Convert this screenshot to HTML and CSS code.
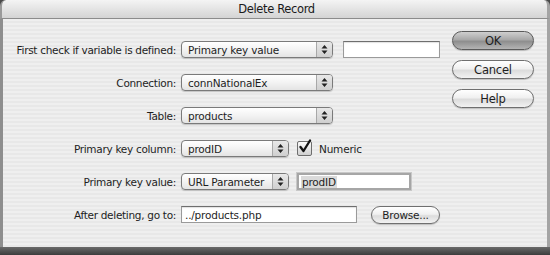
FILE: index.html
```html
<!DOCTYPE html>
<html>
<head>
<meta charset="utf-8">
<link rel="stylesheet" href="styles.css">
</head>
<body>
<div class="window">
  <div class="titlebar">Delete Record</div>
  <div class="body">
    <div class="form">
      <div class="label">First check if variable is defined:</div>
      <div class="ctrl">
        <div class="select w-wide"><span class="val">Primary key value</span><span class="arrows"><svg width="7" height="11" viewBox="0 0 7 11"><path d="M3.5 1 L6.5 4.5 H0.5 Z M3.5 10 L6.5 6.5 H0.5 Z" fill="#222"/></svg></span></div>
        <div class="field w-var"></div>
      </div>

      <div class="label">Connection:</div>
      <div class="ctrl">
        <div class="select w-wide"><span class="val">connNationalEx</span><span class="arrows"><svg width="7" height="11" viewBox="0 0 7 11"><path d="M3.5 1 L6.5 4.5 H0.5 Z M3.5 10 L6.5 6.5 H0.5 Z" fill="#222"/></svg></span></div>
      </div>

      <div class="label">Table:</div>
      <div class="ctrl">
        <div class="select w-wide"><span class="val">products</span><span class="arrows"><svg width="7" height="11" viewBox="0 0 7 11"><path d="M3.5 1 L6.5 4.5 H0.5 Z M3.5 10 L6.5 6.5 H0.5 Z" fill="#222"/></svg></span></div>
      </div>

      <div class="label">Primary key column:</div>
      <div class="ctrl">
        <div class="select w-mid"><span class="val">prodID</span><span class="arrows"><svg width="7" height="11" viewBox="0 0 7 11"><path d="M3.5 1 L6.5 4.5 H0.5 Z M3.5 10 L6.5 6.5 H0.5 Z" fill="#222"/></svg></span></div>
        <div class="check"><svg width="16" height="16" viewBox="0 0 16 16"><path d="M3.5 8 L6.5 12 L13 1.5" fill="none" stroke="#111" stroke-width="2.3" stroke-linecap="round" stroke-linejoin="round"/></svg></div>
        <span class="check-label">Numeric</span>
      </div>

      <div class="label">Primary key value:</div>
      <div class="ctrl">
        <div class="select w-mid"><span class="val">URL Parameter</span><span class="arrows"><svg width="7" height="11" viewBox="0 0 7 11"><path d="M3.5 1 L6.5 4.5 H0.5 Z M3.5 10 L6.5 6.5 H0.5 Z" fill="#222"/></svg></span></div>
        <div class="field w-param focus"><span class="sel">prodID</span></div>
      </div>

      <div class="label">After deleting, go to:</div>
      <div class="ctrl">
        <div class="field w-path">../products.php</div>
        <div class="btn browse">Browse...</div>
      </div>
    </div>
    <div class="buttons">
      <div class="btn main default">OK</div>
      <div class="btn main">Cancel</div>
      <div class="btn main">Help</div>
    </div>
  </div>
  <div class="shadow"></div>
</div>
</body>
</html>
```
FILE: styles.css
```css
* { box-sizing: border-box; }
html, body { margin: 0; padding: 0; }
body {
  width: 550px;
  height: 255px;
  overflow: hidden;
  background: #4a4a4a;
  font-family: "DejaVu Sans", "Noto Sans", sans-serif;
  font-size: 10.5px;
  letter-spacing: -0.2px;
  color: #1e1e1e;
}
.window {
  width: 550px;
  height: 255px;
  display: flex;
  flex-direction: column;
}
.titlebar {
  height: 19px;
  flex: none;
  display: flex;
  align-items: center;
  justify-content: center;
  font-size: 11.5px;
  letter-spacing: -0.35px;
  padding-left: 4px;
  color: #1a1a1a;
  background: linear-gradient(#f4f4f4, #e4e4e4 50%, #d4d4d4);
  border-bottom: 1px solid #8c8c8c;
  border-left: 2px solid #9a9a9a;
  border-right: 3px solid #a4a4a4;
  border-radius: 6px 6px 0 0;
}
.body {
  flex: none;
  height: 228px;
  display: flex;
  background: repeating-linear-gradient(#efefef 0 2px, #e8e8e8 2px 4px);
  border-left: 3px solid #8e8e8e;
  border-right: 3px solid #a4a4a4;
}
.form {
  padding-top: 14px;
  display: grid;
  grid-template-columns: 173px 259px;
  grid-auto-rows: 33px;
  column-gap: 5px;
  align-items: center;
}
.label {
  text-align: right;
  white-space: nowrap;
  letter-spacing: -0.3px;
}
.ctrl {
  display: flex;
  align-items: center;
}
.select {
  height: 17px;
  display: flex;
  align-items: center;
  border: 1px solid #7a7a7a;
  border-radius: 4px;
  background: linear-gradient(#ffffff, #f3f3f3 50%, #e4e4e4);
  box-shadow: 0 1px 1px rgba(0,0,0,0.18);
  overflow: hidden;
}
.select .val {
  flex: 1;
  padding-left: 6px;
  white-space: nowrap;
  overflow: hidden;
}
.select .arrows {
  width: 16px;
  height: 100%;
  display: flex;
  align-items: center;
  justify-content: center;
  border-left: 1px solid #a8a8a8;
  background: linear-gradient(#e8e8e8, #cfcfcf);
}
.w-wide { width: 152px; }
.w-mid { width: 108px; }
.field {
  height: 17px;
  background: #fff;
  border: 1px solid #9a9a9a;
  border-top-color: #6e6e6e;
  box-shadow: inset 0 1px 1px rgba(0,0,0,0.12);
  padding-left: 3px;
  display: flex;
  align-items: center;
  white-space: nowrap;
}
.w-var { width: 97px; margin-left: 10px; }
.w-param { width: 114px; margin-left: 8px; }
.w-path { width: 176px; }
.field.focus {
  border: 2px solid #a6a6a6;
  box-shadow: 0 0 0 1px #c8c8c8;
  padding-left: 2px;
}
.sel { background: #dadada; padding: 0 1px; }
.check {
  width: 15px;
  height: 15px;
  margin-left: 8px;
  border: 1px solid #6e6e6e;
  border-radius: 2px;
  background: linear-gradient(#fafafa, #d0d0d0);
  position: relative;
}
.check svg { position: absolute; left: -1px; top: -3px; }
.check-label { margin-left: 7px; }
.btn {
  display: flex;
  align-items: center;
  justify-content: center;
  border: 1px solid #6f6f6f;
  border-radius: 10px;
  background: linear-gradient(#ffffff, #f0f0f0 45%, #dcdcdc 55%, #f2f2f2);
  box-shadow: 0 1px 1px rgba(0,0,0,0.2);
  color: #1e1e1e;
}
.browse {
  width: 69px;
  height: 18px;
  margin-left: 14px;
}
.buttons {
  margin-left: 12px;
  padding-top: 12px;
  display: flex;
  flex-direction: column;
  gap: 10px;
}
.btn.main {
  width: 82px;
  height: 19px;
  font-size: 11.5px;
}
.btn.default {
  border-color: #5a5a5a;
  background: linear-gradient(#cfcfcf, #a8a8a8 45%, #8e8e8e 55%, #b4b4b4);
}
.shadow {
  flex: 1;
  background: linear-gradient(#6a6a6a, #3c3c3c);
}
```
